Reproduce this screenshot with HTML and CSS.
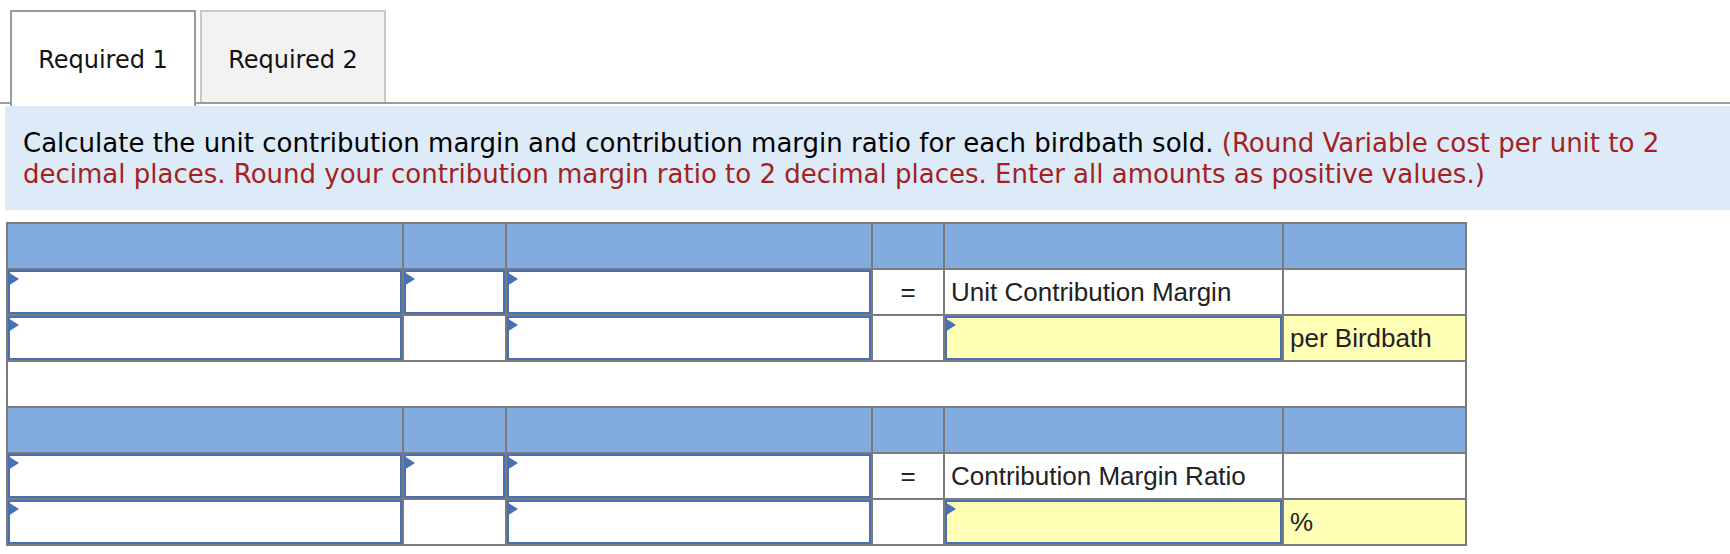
FILE: index.html
```html
<!DOCTYPE html>
<html>
<head>
<meta charset="utf-8">
<link rel="stylesheet" href="styles.css">
</head>
<body>
<div class="tabbar">
  <div class="tab tab-active">Required 1</div>
  <div class="tab tab-idle">Required 2</div>
</div>
<div class="prompt">Calculate the unit contribution margin and contribution margin ratio for each birdbath sold. <span class="note">(Round Variable cost per unit to 2<br>decimal places. Round your contribution margin ratio to 2 decimal places. Enter all amounts as positive values.)</span></div>
<div class="sheet">
  <div class="hd"></div><div class="hd"></div><div class="hd"></div><div class="hd"></div><div class="hd"></div><div class="hd"></div>

  <div class="cell"><div class="inp"></div></div>
  <div class="cell"><div class="inp"></div></div>
  <div class="cell"><div class="inp"></div></div>
  <div class="cell eq">=</div>
  <div class="cell lbl">Unit Contribution Margin</div>
  <div class="cell"></div>

  <div class="cell"><div class="inp"></div></div>
  <div class="cell"></div>
  <div class="cell"><div class="inp"></div></div>
  <div class="cell"></div>
  <div class="cell yellow"><div class="inp yellow"></div></div>
  <div class="cell lbl yellow">per Birdbath</div>

  <div class="cell spacer"></div>

  <div class="hd"></div><div class="hd"></div><div class="hd"></div><div class="hd"></div><div class="hd"></div><div class="hd"></div>

  <div class="cell"><div class="inp"></div></div>
  <div class="cell"><div class="inp"></div></div>
  <div class="cell"><div class="inp"></div></div>
  <div class="cell eq">=</div>
  <div class="cell lbl">Contribution Margin Ratio</div>
  <div class="cell"></div>

  <div class="cell"><div class="inp"></div></div>
  <div class="cell"></div>
  <div class="cell"><div class="inp"></div></div>
  <div class="cell"></div>
  <div class="cell yellow"><div class="inp yellow"></div></div>
  <div class="cell lbl yellow">%</div>
</div>
</body>
</html>
```

FILE: styles.css
```css
html, body {
  margin: 0;
  padding: 0;
  background: #ffffff;
}

body {
  font-family: "DejaVu Sans", Verdana, sans-serif;
  color: #000;
}

.tabbar {
  display: flex;
  align-items: flex-start;
  gap: 4px;
  height: 104px;
  box-sizing: border-box;
  padding: 10px 0 0 10px;
  border-bottom: 2px solid #9c9c9c;
}

.tab {
  box-sizing: border-box;
  width: 186px;
  display: flex;
  align-items: center;
  justify-content: center;
  font-size: 24px;
  color: #111;
}

.tab-active {
  height: 96px;
  margin-bottom: -4px;
  padding-top: 2px;
  background: #ffffff;
  border: 2px solid #9a9a9a;
  border-bottom: none;
}

.tab-idle {
  height: 92px;
  padding-top: 6px;
  background: #f2f2f2;
  border: 2px solid #c8c8c8;
  border-bottom: none;
}

.prompt {
  margin: 2px 0 0 5px;
  height: 104px;
  box-sizing: border-box;
  padding: 22px 8px 0 18px;
  background: #ddebf8;
  font-size: 26px;
  line-height: 31px;
  color: #000;
  white-space: nowrap;
}

.note {
  color: #a3221e;
}

.sheet {
  margin: 12px 0 0 6px;
  display: grid;
  grid-template-columns: 394px 101px 364px 70px 337px 181px;
  grid-auto-rows: 44px;
  gap: 2px;
  padding: 2px;
  background: #7b7b7b;
  width: max-content;
}

.hd {
  background: #82abdf;
}

.cell {
  background: #ffffff;
  font-family: "Liberation Sans", Arial, sans-serif;
  font-size: 26px;
  color: #222;
  display: flex;
  align-items: center;
}

.cell.yellow {
  background: #ffffb6;
}

.spacer {
  grid-column: 1 / -1;
}

.eq {
  justify-content: center;
}

.lbl {
  padding-left: 6px;
}

.inp {
  position: relative;
  box-sizing: border-box;
  width: 100%;
  height: 100%;
  border: 2px solid #4672b5;
  background: #ffffff;
}

.inp.yellow {
  background: #ffffb6;
}

.inp::before {
  content: "";
  position: absolute;
  left: -2px;
  top: 0;
  width: 0;
  height: 0;
  border-left: 11px solid #4672b5;
  border-top: 7px solid transparent;
  border-bottom: 7px solid transparent;
}
```
